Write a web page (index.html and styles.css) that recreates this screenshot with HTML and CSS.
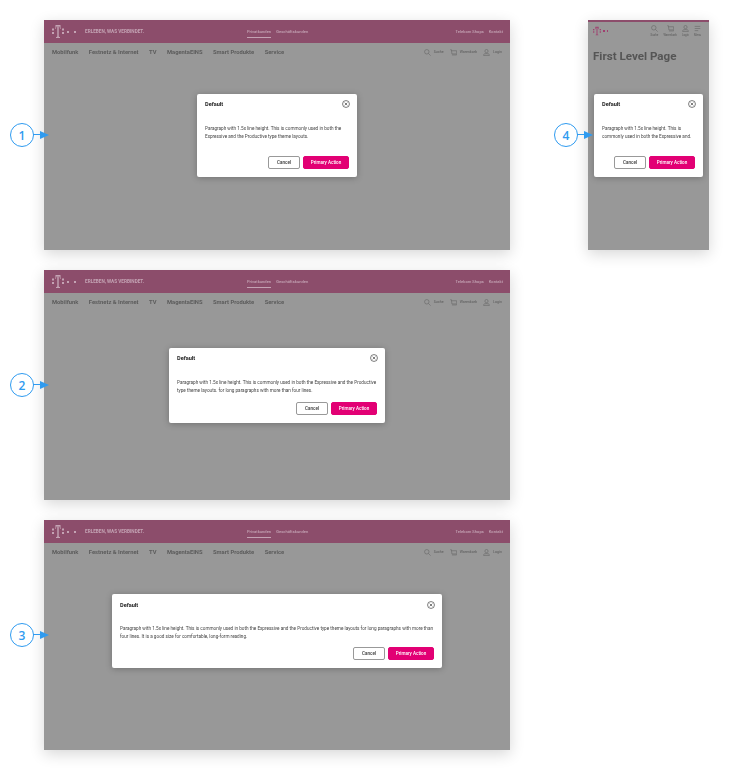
FILE: index.html
```html
<!DOCTYPE html>
<html lang="en">
<head>
  <meta charset="UTF-8">
  <title>Modal sizes</title>
  <link rel="stylesheet" href="styles.css">
</head>
<body>
  <div class="sheet">

    <!-- 1: small modal, desktop -->
    <section class="frame">
      <header class="topbar">
        <div class="brand">
          <svg class="logo" viewBox="0 0 12 15"><path d="M3.500 1h5l.1 4H8c-.1-1.800-.7-2.800-1.300-2.900v10c0 .8.300 1 1.300 1v.9H4v-.9c1 0 1.300-.2 1.300-1v-10C4.700 2.200 4.100 3.200 4 5h-.6z"/><rect x="0" y="4.500" width="2" height="2"/><rect x="10" y="4.500" width="2" height="2"/><rect x="0" y="8" width="2" height="2"/><rect x="10" y="8" width="2" height="2"/></svg>
          <i class="dot"></i><i class="dot"></i>
          <span class="tagline">ERLEBEN, WAS VERBINDET.</span>
        </div>
        <div class="segments"><a class="active">Privatkunden</a><a>Geschäftskunden</a></div>
        <div class="meta"><a>Telekom Shops</a><a>Kontakt</a></div>
      </header>
      <nav class="mainnav">
        <a>Mobilfunk</a><a>Festnetz &amp; Internet</a><a>TV</a><a>MagentaEINS</a><a>Smart Produkte</a><a>Service</a>
        <div class="tools">
          <span class="tool"><svg viewBox="0 0 10 10"><circle cx="4" cy="4" r="3.200"/><path d="M6.400 6.400 9.500 9.500"/></svg>Suche</span>
          <span class="tool"><svg viewBox="0 0 10 10"><path d="M.5 1h1.500l.7 6h6M2.200 2.500h7.300v6H2.800"/></svg>Warenkorb</span>
          <span class="tool"><svg viewBox="0 0 10 10"><circle cx="5" cy="3" r="2.300"/><path d="M1 8c0-2 8-2 8 0v1.200H1z"/></svg>Login</span>
        </div>
      </nav>
      <div class="scrim">
        <div class="modal modal-sm">
          <div class="modal-head"><h3>Default</h3><svg class="close" viewBox="0 0 10 10"><circle cx="5" cy="5" r="4.300"/><path d="M3.300 3.300 6.700 6.700M6.700 3.300 3.300 6.700"/></svg></div>
          <p>Paragraph with 1.5x line height. This is commonly used in both the Expressive and the Productive type theme layouts.</p>
          <div class="modal-actions"><button class="btn">Cancel</button><button class="btn btn-primary">Primary Action</button></div>
        </div>
      </div>
      <div class="marker"><span>1</span></div>
    </section>

    <!-- 4: small modal, mobile -->
    <section class="frame">
      <header class="mobilebar">
        <div class="brand">
          <svg class="logo" viewBox="0 0 12 15"><path d="M3.500 1h5l.1 4H8c-.1-1.800-.7-2.800-1.300-2.900v10c0 .8.300 1 1.300 1v.9H4v-.9c1 0 1.300-.2 1.300-1v-10C4.700 2.200 4.100 3.200 4 5h-.6z"/><rect x="0" y="4.500" width="2" height="2"/><rect x="10" y="4.500" width="2" height="2"/><rect x="0" y="8" width="2" height="2"/><rect x="10" y="8" width="2" height="2"/></svg>
          <i class="dot"></i><i class="dot"></i>
        </div>
        <div class="mobile-tools">
          <span class="tool"><svg viewBox="0 0 10 10"><circle cx="4" cy="4" r="3.200"/><path d="M6.400 6.400 9.500 9.500"/></svg>Suche</span>
          <span class="tool"><svg viewBox="0 0 10 10"><path d="M.5 1h1.500l.7 6h6M2.200 2.500h7.300v6H2.800"/></svg>Warenkorb</span>
          <span class="tool"><svg viewBox="0 0 10 10"><circle cx="5" cy="3" r="2.300"/><path d="M1 8c0-2 8-2 8 0v1.200H1z"/></svg>Login</span>
          <span class="tool"><svg viewBox="0 0 10 10"><path d="M1 2h8M1 5h8M1 8h5"/></svg>Menu</span>
        </div>
      </header>
      <h1 class="page-title">First Level Page</h1>
      <div class="scrim">
        <div class="modal modal-xs">
          <div class="modal-head"><h3>Default</h3><svg class="close" viewBox="0 0 10 10"><circle cx="5" cy="5" r="4.300"/><path d="M3.300 3.300 6.700 6.700M6.700 3.300 3.300 6.700"/></svg></div>
          <p>Paragraph with 1.5x line height. This is commonly used in both the Expressive and.</p>
          <div class="modal-actions"><button class="btn">Cancel</button><button class="btn btn-primary">Primary Action</button></div>
        </div>
      </div>
      <div class="marker"><span>4</span></div>
    </section>

    <!-- 2: medium modal -->
    <section class="frame">
      <header class="topbar">
        <div class="brand">
          <svg class="logo" viewBox="0 0 12 15"><path d="M3.500 1h5l.1 4H8c-.1-1.800-.7-2.800-1.300-2.900v10c0 .8.300 1 1.300 1v.9H4v-.9c1 0 1.300-.2 1.300-1v-10C4.700 2.200 4.100 3.200 4 5h-.6z"/><rect x="0" y="4.500" width="2" height="2"/><rect x="10" y="4.500" width="2" height="2"/><rect x="0" y="8" width="2" height="2"/><rect x="10" y="8" width="2" height="2"/></svg>
          <i class="dot"></i><i class="dot"></i>
          <span class="tagline">ERLEBEN, WAS VERBINDET.</span>
        </div>
        <div class="segments"><a class="active">Privatkunden</a><a>Geschäftskunden</a></div>
        <div class="meta"><a>Telekom Shops</a><a>Kontakt</a></div>
      </header>
      <nav class="mainnav">
        <a>Mobilfunk</a><a>Festnetz &amp; Internet</a><a>TV</a><a>MagentaEINS</a><a>Smart Produkte</a><a>Service</a>
        <div class="tools">
          <span class="tool"><svg viewBox="0 0 10 10"><circle cx="4" cy="4" r="3.200"/><path d="M6.400 6.400 9.500 9.500"/></svg>Suche</span>
          <span class="tool"><svg viewBox="0 0 10 10"><path d="M.5 1h1.500l.7 6h6M2.200 2.500h7.300v6H2.800"/></svg>Warenkorb</span>
          <span class="tool"><svg viewBox="0 0 10 10"><circle cx="5" cy="3" r="2.300"/><path d="M1 8c0-2 8-2 8 0v1.200H1z"/></svg>Login</span>
        </div>
      </nav>
      <div class="scrim">
        <div class="modal modal-md">
          <div class="modal-head"><h3>Default</h3><svg class="close" viewBox="0 0 10 10"><circle cx="5" cy="5" r="4.300"/><path d="M3.300 3.300 6.700 6.700M6.700 3.300 3.300 6.700"/></svg></div>
          <p>Paragraph with 1.5x line height. This is commonly used in both the Expressive and the Productive type theme layouts. for long paragraphs with more than four lines.</p>
          <div class="modal-actions"><button class="btn">Cancel</button><button class="btn btn-primary">Primary Action</button></div>
        </div>
      </div>
      <div class="marker"><span>2</span></div>
    </section>

    <!-- 3: large modal -->
    <section class="frame frame-first">
      <header class="topbar">
        <div class="brand">
          <svg class="logo" viewBox="0 0 12 15"><path d="M3.500 1h5l.1 4H8c-.1-1.800-.7-2.800-1.300-2.900v10c0 .8.300 1 1.300 1v.9H4v-.9c1 0 1.300-.2 1.300-1v-10C4.700 2.200 4.100 3.200 4 5h-.6z"/><rect x="0" y="4.500" width="2" height="2"/><rect x="10" y="4.500" width="2" height="2"/><rect x="0" y="8" width="2" height="2"/><rect x="10" y="8" width="2" height="2"/></svg>
          <i class="dot"></i><i class="dot"></i>
          <span class="tagline">ERLEBEN, WAS VERBINDET.</span>
        </div>
        <div class="segments"><a class="active">Privatkunden</a><a>Geschäftskunden</a></div>
        <div class="meta"><a>Telekom Shops</a><a>Kontakt</a></div>
      </header>
      <nav class="mainnav">
        <a>Mobilfunk</a><a>Festnetz &amp; Internet</a><a>TV</a><a>MagentaEINS</a><a>Smart Produkte</a><a>Service</a>
        <div class="tools">
          <span class="tool"><svg viewBox="0 0 10 10"><circle cx="4" cy="4" r="3.200"/><path d="M6.400 6.400 9.500 9.500"/></svg>Suche</span>
          <span class="tool"><svg viewBox="0 0 10 10"><path d="M.5 1h1.500l.7 6h6M2.200 2.500h7.300v6H2.800"/></svg>Warenkorb</span>
          <span class="tool"><svg viewBox="0 0 10 10"><circle cx="5" cy="3" r="2.300"/><path d="M1 8c0-2 8-2 8 0v1.200H1z"/></svg>Login</span>
        </div>
      </nav>
      <div class="scrim">
        <div class="modal modal-lg">
          <div class="modal-head"><h3>Default</h3><svg class="close" viewBox="0 0 10 10"><circle cx="5" cy="5" r="4.300"/><path d="M3.300 3.300 6.700 6.700M6.700 3.300 3.300 6.700"/></svg></div>
          <p>Paragraph with 1.5x line height. This is commonly used in both the Expressive and the Productive type theme layouts for long paragraphs with more than four lines. It is a good size for comfortable, long-form reading.</p>
          <div class="modal-actions"><button class="btn">Cancel</button><button class="btn btn-primary">Primary Action</button></div>
        </div>
      </div>
      <div class="marker"><span>3</span></div>
    </section>

  </div>
</body>
</html>
```

FILE: styles.css
```css
body {
  margin: 0;
  background-color: #fff;
  font-family: Roboto, "Liberation Sans", sans-serif;
}

.sheet {
  display: grid;
  grid-template-columns: 466px 121px;
  column-gap: 78px;
  row-gap: 20px;
  padding: 20px 0 20px 44px;
}

.frame {
  position: relative;
  height: 230px;
  background-color: #989898;
  box-shadow: 0 4px 14px rgba(0, 0, 0, 0.16);
}

.frame-first {
  grid-column: 1;
}

/* top bar */
.topbar {
  display: flex;
  align-items: center;
  height: 23px;
  padding: 0 7px 0 8px;
  background-color: #8c4d6b;
  color: #c4a3b4;
  font-size: 4.100px;
  font-weight: 500;
  filter: blur(0.4px);
}

.brand {
  display: flex;
  align-items: center;
  width: 195px;
}

.logo {
  width: 12px;
  height: 15px;
  margin-right: -2px;
  fill: #c4a3b4;
}

.dot {
  width: 2px;
  height: 2px;
  margin-left: 5px;
  background-color: #c4a3b4;
}

.tagline {
  margin-left: 9px;
  font-size: 4.700px;
  font-weight: 700;
}

.segments {
  display: flex;
  gap: 5px;
}

.segments a {
  padding: 3px 0;
  border-bottom: 1px solid transparent;
}

.segments a.active {
  border-bottom-color: #c4a3b4;
}

.meta {
  display: flex;
  gap: 5px;
  margin-left: auto;
}

/* main nav */
.mainnav {
  display: flex;
  align-items: center;
  gap: 10.500px;
  height: 16px;
  padding: 1px 8px 0;
  color: #5c5c5c;
  font-size: 5.800px;
  font-weight: 700;
  filter: blur(0.4px);
}

.tools {
  display: flex;
  gap: 6px;
  margin-left: auto;
}

.tool {
  display: flex;
  align-items: center;
  gap: 3px;
  font-size: 3.600px;
  font-weight: 500;
  color: #666;
}

.tool svg {
  width: 7px;
  height: 7px;
  fill: none;
  stroke: #5c5c5c;
  stroke-width: 0.7;
}

/* mobile frame */
.mobilebar {
  display: flex;
  justify-content: space-between;
  padding: 3px 8px 0 5px;
  border-top: 2px solid #8c4d6b;
  filter: blur(0.4px);
}

.mobilebar .brand {
  width: auto;
}

.mobilebar .logo {
  width: 8px;
  height: 10px;
  margin-right: 0;
  fill: #a0406f;
}

.mobilebar .dot {
  width: 1.500px;
  height: 1.500px;
  margin-left: 2px;
  background-color: #a0406f;
}

.mobile-tools {
  display: flex;
  gap: 5px;
}

.mobile-tools .tool {
  flex-direction: column;
  gap: 1px;
  font-size: 2.800px;
}

.page-title {
  margin: 12px 0 0 5px;
  color: #555;
  font-size: 11.600px;
  font-weight: 700;
  filter: blur(0.4px);
}

/* modal */
.scrim {
  position: absolute;
  inset: 0;
  display: flex;
  justify-content: center;
  align-items: center;
}

.modal {
  box-sizing: border-box;
  padding: 0 8px 8px;
  border-radius: 2px;
  background-color: #fff;
  box-shadow: 0 1px 6px rgba(0, 0, 0, 0.25);
  filter: blur(0.25px);
}

.modal-sm {
  width: 160px;
}

.modal-xs {
  width: 109px;
}

.modal-md {
  width: 216px;
}

.modal-lg {
  width: 330px;
  margin-bottom: 8px;
}

.modal-head {
  display: flex;
  justify-content: space-between;
  align-items: center;
  height: 21px;
  margin-right: -1px;
}

.modal h3 {
  margin: 0;
  font-size: 5.600px;
  font-weight: 700;
  color: #222;
}

.close {
  width: 8px;
  height: 8px;
  fill: none;
  stroke: #333;
  stroke-width: 0.8;
}

.modal p {
  margin: 10px 0 0;
  font-size: 4.650px;
  line-height: 8px;
  color: #444;
}

.modal-actions {
  display: flex;
  justify-content: flex-end;
  gap: 3px;
  margin-top: 6px;
}

.modal-sm .modal-actions,
.modal-xs .modal-actions {
  margin-top: 15px;
}

.modal-md .modal-actions {
  margin-top: 7px;
}

.btn {
  width: 32px;
  height: 13px;
  padding: 0;
  border: 1px solid #999;
  border-radius: 2px;
  background-color: #fff;
  color: #333;
  font-family: inherit;
  font-size: 4.600px;
  font-weight: 500;
}

.btn-primary {
  width: 46px;
  border-color: #e20074;
  background-color: #e20074;
  color: #fff;
}

/* callouts */
.marker {
  position: absolute;
  top: 103px;
  left: -34px;
  width: 24px;
  height: 24px;
  border: 1.500px solid #2f9bf0;
  border-radius: 50%;
  box-sizing: border-box;
  display: flex;
  justify-content: center;
  align-items: center;
  background-color: #fff;
  color: #2f9bf0;
  font-size: 12px;
  font-weight: 600;
  font-family: "Open Sans", sans-serif;
}

.marker::before {
  content: "";
  position: absolute;
  left: 22px;
  top: 10px;
  width: 8px;
  height: 1px;
  background-color: #2f9bf0;
}

.marker::after {
  content: "";
  position: absolute;
  left: 29px;
  top: 6.500px;
  border-left: 9px solid #2f9bf0;
  border-top: 4px solid transparent;
  border-bottom: 4px solid transparent;
}
```
